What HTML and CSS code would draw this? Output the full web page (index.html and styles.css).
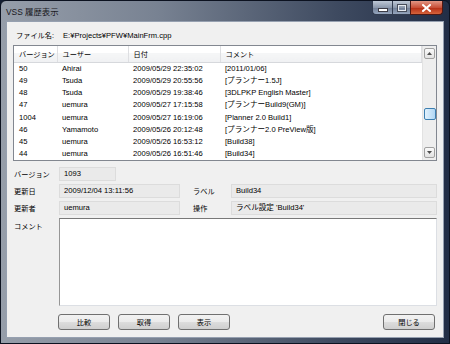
FILE: index.html
```html
<!DOCTYPE html>
<html lang="ja">
<head>
    <meta charset="UTF-8">
    <title>VSS 履歴表示</title>
    <link rel="stylesheet" href="styles.css">
</head>
<body>
    <div class="window">
        <div class="titlebar">
            <span class="title">VSS 履歴表示</span>
            <div class="controls">
                <span class="ctl ctl-min"><i></i></span>
                <span class="ctl ctl-max"><i></i></span>
                <span class="ctl ctl-close">
                    <svg width="9" height="8" viewBox="0 0 9 8"><path d="M1 1 L8 7 M8 1 L1 7" stroke="#fff" stroke-width="2" stroke-linecap="square"/></svg>
                </span>
            </div>
        </div>

        <div class="client">
            <div class="file-row">
                <span class="lbl">ファイル名:</span>
                <span class="path">E:¥Projects¥PFW¥MainFrm.cpp</span>
            </div>

            <div class="list">
                <div class="list-body">
                    <table class="history">
                        <colgroup>
                            <col class="c-ver"><col class="c-user"><col class="c-date"><col>
                        </colgroup>
                        <thead>
                            <tr><th>バージョン</th><th>ユーザー</th><th>日付</th><th>コメント</th></tr>
                        </thead>
                        <tbody>
                            <tr><td>50</td><td>Ahirai</td><td>2009/05/29 22:35:02</td><td>[2011/01/06]</td></tr>
                            <tr><td>49</td><td>Tsuda</td><td>2009/05/29 20:55:56</td><td>[プランナー1.5J]</td></tr>
                            <tr><td>48</td><td>Tsuda</td><td>2009/05/29 19:38:46</td><td>[3DLPKP English Master]</td></tr>
                            <tr><td>47</td><td>uemura</td><td>2009/05/27 17:15:58</td><td>[プランナーBuild9(GM)]</td></tr>
                            <tr><td>1004</td><td>uemura</td><td>2009/05/27 16:19:06</td><td>[Planner 2.0 Build1]</td></tr>
                            <tr><td>46</td><td>Yamamoto</td><td>2009/05/26 20:12:48</td><td>[プランナー2.0 PreView版]</td></tr>
                            <tr><td>45</td><td>uemura</td><td>2009/05/26 16:53:12</td><td>[Build38]</td></tr>
                            <tr><td>44</td><td>uemura</td><td>2009/05/26 16:51:46</td><td>[Build34]</td></tr>
                        </tbody>
                    </table>
                </div>
                <div class="vscroll">
                    <div class="arrow">
                        <svg width="5" height="3" viewBox="0 0 5 3"><path d="M0 3 L2.5 0 L5 3 Z" fill="#4d4d4d"/></svg>
                    </div>
                    <div class="track"><div class="thumb"></div></div>
                    <div class="arrow">
                        <svg width="5" height="3" viewBox="0 0 5 3"><path d="M0 0 L5 0 L2.5 3 Z" fill="#4d4d4d"/></svg>
                    </div>
                </div>
            </div>

            <div class="details">
                <span class="lbl">バージョン</span>
                <div class="field field-short">1093</div>
                <span></span><span></span>

                <span class="lbl">更新日</span>
                <div class="field">2009/12/04 13:11:56</div>
                <span class="lbl lbl-right">ラベル</span>
                <div class="field">Build34</div>

                <span class="lbl">更新者</span>
                <div class="field">uemura</div>
                <span class="lbl lbl-right">操作</span>
                <div class="field">ラベル設定 'Build34'</div>

                <span class="lbl lbl-top">コメント</span>
                <div class="comment"></div>
            </div>

            <div class="buttons">
                <button class="btn">比較</button>
                <button class="btn">取得</button>
                <button class="btn">表示</button>
                <button class="btn btn-close">閉じる</button>
            </div>
        </div>
    </div>
</body>
</html>
```

FILE: styles.css
```css
body {
    margin: 0;
    background-color: rgb(20, 30, 50);
    font-family: 'Liberation Sans', 'Noto Sans CJK JP', sans-serif;
    font-size: 7.6px;
    color: #000;
}
.window {
    width: 450px;
    height: 344px;
    box-sizing: border-box;
    display: flex;
    flex-direction: column;
    padding: 0 5px 5px 5px;
    border: 1px solid rgb(12, 18, 32);
    border-radius: 6px 6px 0 0;
    background: linear-gradient(to right, rgb(150, 158, 170) 0%, rgb(120, 130, 146) 35%, rgb(62, 74, 96) 75%, rgb(34, 46, 70) 100%);
}
.titlebar {
    height: 20px;
    display: flex;
    justify-content: space-between;
    align-items: flex-start;
}
.title {
    font-size: 8.4px;
    margin-top: 4px;
    color: rgb(24, 24, 28);
}
.controls {
    display: flex;
    margin-right: 1px;
}
.ctl {
    height: 14px;
    display: flex;
    align-items: center;
    justify-content: center;
    box-sizing: border-box;
    border: 1px solid rgb(50, 60, 80);
    border-top: none;
    background: linear-gradient(rgb(190, 200, 214), rgb(140, 152, 172) 50%, rgb(110, 124, 148) 51%, rgb(150, 166, 190));
}
.ctl-min {
    width: 20px;
    border-radius: 0 0 0 4px;
    border-right: none;
}
.ctl-min i {
    width: 8px;
    height: 2px;
    margin-top: 4px;
    background-color: #fff;
    border: 1px solid rgb(60, 60, 70);
}
.ctl-max {
    width: 18px;
    border-right: none;
}
.ctl-max i {
    width: 6px;
    height: 4px;
    border: 1px solid rgb(230, 234, 240);
    outline: 1px solid rgb(70, 76, 90);
}
.ctl-close {
    width: 33px;
    border-radius: 0 0 4px 0;
    border-color: rgb(80, 24, 18);
    background: linear-gradient(rgb(226, 150, 132), rgb(200, 80, 56) 50%, rgb(180, 44, 20) 51%, rgb(214, 100, 60));
}
.client {
    flex: 1;
    background-color: rgb(240, 240, 240);
    border: 1px solid rgb(150, 160, 176);
    padding: 7px 6px 0 6px;
    display: flex;
    flex-direction: column;
}
.file-row {
    height: 12px;
    margin-bottom: 4px;
    display: flex;
    align-items: center;
}
.lbl {
    font-size: 7.2px;
    white-space: nowrap;
}
.file-row .lbl {
    margin-left: 3px;
    width: 47px;
}
.list {
    height: 116px;
    box-sizing: border-box;
    border: 1px solid rgb(130, 135, 144);
    background-color: #fff;
    display: flex;
}
.list-body {
    flex: 1;
    overflow: hidden;
}
.history {
    width: 100%;
    border-collapse: collapse;
    table-layout: fixed;
}
.c-ver { width: 43px; }
.c-user { width: 71px; }
.c-date { width: 92px; }
.history th {
    height: 16px;
    padding: 0 0 0 5px;
    text-align: left;
    font-weight: normal;
    font-size: 7.2px;
    border-right: 1px solid rgb(222, 223, 226);
    border-bottom: 1px solid rgb(214, 216, 220);
    background: linear-gradient(#fff 0%, #fff 45%, rgb(245, 246, 247) 46%, rgb(240, 241, 243) 100%);
}
.history td {
    height: 12.15px;
    line-height: 12.15px;
    padding: 0 0 0 5px;
    white-space: nowrap;
    overflow: hidden;
}
.vscroll {
    width: 13px;
    display: flex;
    flex-direction: column;
    background-color: rgb(238, 238, 238);
    border-left: 1px solid rgb(226, 226, 226);
}
.arrow {
    height: 11px;
    margin: 2px 1px;
    box-sizing: border-box;
    border: 1px solid rgb(160, 160, 160);
    border-radius: 2px;
    background: linear-gradient(rgb(250, 250, 250), rgb(226, 226, 226));
    display: flex;
    align-items: center;
    justify-content: center;
}
.track {
    flex: 1;
    display: flex;
    flex-direction: column;
    justify-content: flex-end;
    padding-bottom: 25px;
}
.thumb {
    height: 12px;
    margin: 0 0 0 1px;
    box-sizing: border-box;
    border: 1px solid rgb(60, 127, 177);
    border-radius: 2px;
    background: linear-gradient(to right, rgb(226, 242, 253), rgb(176, 214, 244));
}
.details {
    margin-top: 6px;
    display: grid;
    grid-template-columns: 46px 121px 51px 1fr;
    grid-template-rows: 14px 14px 14px 88px;
    row-gap: 3px;
    align-items: center;
}
.details .lbl {
    padding-left: 1px;
}
.details .lbl-right {
    padding-left: 13px;
}
.details .lbl-top {
    align-self: start;
    margin-top: 3px;
}
.field {
    height: 14px;
    box-sizing: border-box;
    padding: 0 4px;
    line-height: 12px;
    background-color: rgb(234, 234, 234);
    border: 1px solid rgb(220, 220, 220);
    white-space: nowrap;
}
.field-short {
    width: 57px;
}
.comment {
    grid-column: 2 / 5;
    height: 88px;
    box-sizing: border-box;
    background-color: #fff;
    border: 1px solid rgb(220, 223, 228);
    border-top-color: rgb(120, 120, 120);
    border-left-color: rgb(150, 150, 150);
}
.buttons {
    margin-top: 8px;
    display: flex;
    gap: 8px;
    padding-left: 45px;
}
.btn {
    width: 52px;
    height: 16px;
    padding: 0;
    font-family: inherit;
    font-size: 7.2px;
    color: #000;
    border: 1px solid rgb(112, 112, 112);
    border-radius: 3px;
    background: linear-gradient(rgb(242, 242, 242) 0%, rgb(235, 235, 235) 50%, rgb(221, 221, 221) 51%, rgb(207, 207, 207) 100%);
}
.btn-close {
    margin-left: auto;
    margin-right: 2px;
}
```
